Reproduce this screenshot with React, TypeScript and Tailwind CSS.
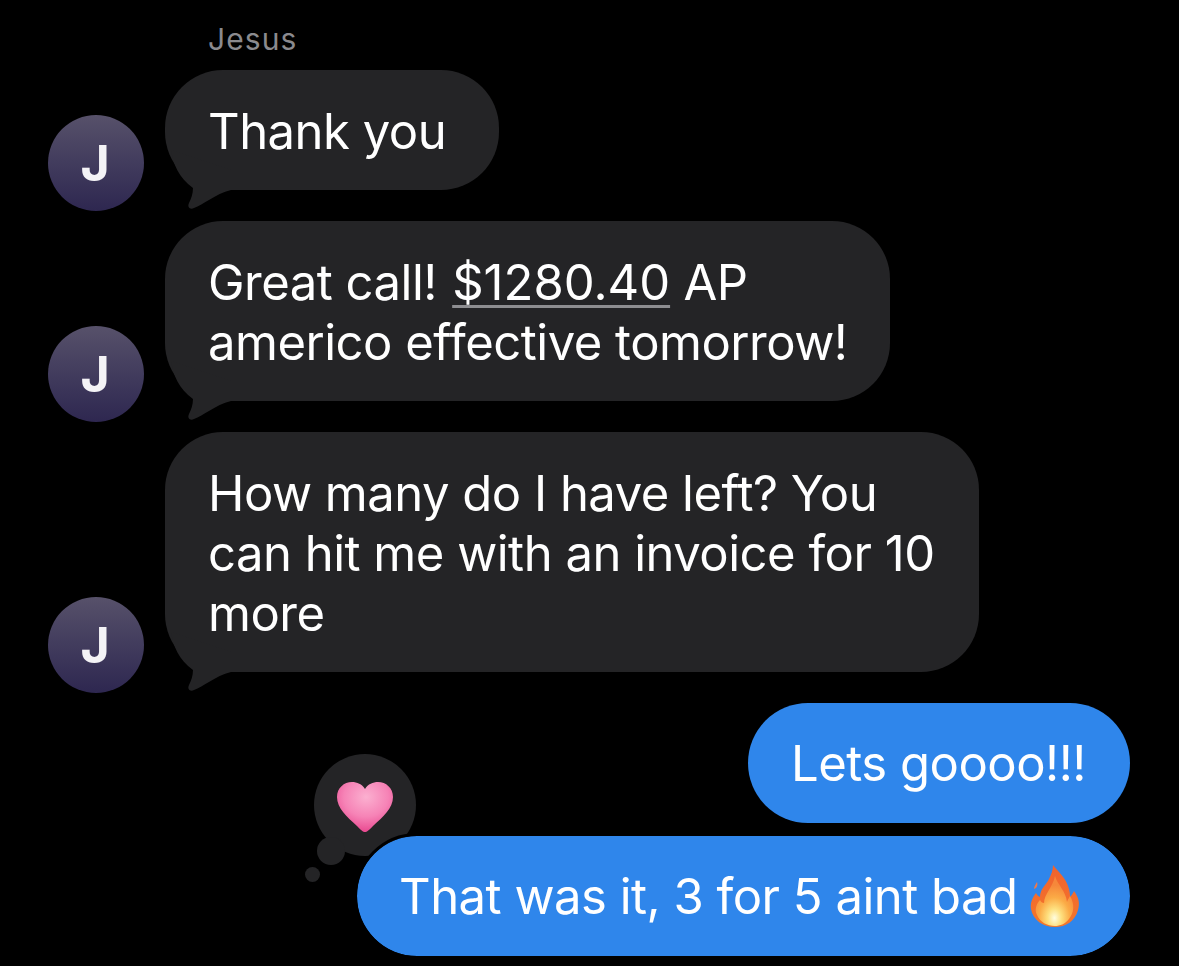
import React from "react";

const Avatar = () => (
  <div className="w-[96px] h-[96px] -mb-[21px] shrink-0 rounded-full bg-gradient-to-b from-[#57516a] to-[#2e2750] flex items-center justify-center text-[#f4f3f6] text-[50px] font-bold leading-none">
    <span className="-ml-[2px]">J</span>
  </div>
);

const Incoming = ({ width, children }: { width: string; children: React.ReactNode }) => (
  <div className="flex items-end gap-[21px]">
    <Avatar />
    <div className="relative">
      <div className={`bg-[#242426] rounded-[58px] pl-[43px] pt-[32px] pb-[28px] text-white text-[49px] leading-[60px] tracking-[-0.5px] whitespace-nowrap ${width}`}>
        {children}
      </div>
      <svg className="absolute left-[2px] -bottom-[20px]" width="70" height="60" viewBox="0 0 70 60" fill="#242426">
        <path d="M4 0 C6 14 12 28 26 38 C26 44 24 49 22 53 C20 57 23 60 27 58 C36 55 48 44 64 40 L64 20 L4 0 Z" />
      </svg>
    </div>
  </div>
);

const Heart = () => (
  <svg width="56" height="50" viewBox="0 0 56 50">
    <defs>
      <radialGradient id="heartFill" cx="52%" cy="30%" r="72%">
        <stop offset="0%" stopColor="#fbb0d0" />
        <stop offset="55%" stopColor="#f683b6" />
        <stop offset="100%" stopColor="#e8458d" />
      </radialGradient>
    </defs>
    <path
      d="M28 50 C26 50 24 48 20 44 C10 35 0 26 0 15 C0 6 7 0 15 0 C20 0 25 2 28 7 C31 2 36 0 41 0 C49 0 56 6 56 15 C56 26 46 35 36 44 C32 48 30 50 28 50 Z"
      fill="url(#heartFill)"
    />
  </svg>
);

const Flame = () => (
  <svg width="50" height="62" viewBox="0 0 50 62" className="shrink-0">
    <defs>
      <linearGradient id="flameOuter" x1="0" y1="0" x2="0" y2="1">
        <stop offset="0%" stopColor="#f0622e" />
        <stop offset="100%" stopColor="#f4772b" />
      </linearGradient>
      <radialGradient id="flameCore" cx="50%" cy="84%" r="66%">
        <stop offset="0%" stopColor="#fffde0" />
        <stop offset="28%" stopColor="#fee07f" />
        <stop offset="62%" stopColor="#fbab46" />
        <stop offset="100%" stopColor="#f6873a" />
      </radialGradient>
    </defs>
    <path
      d="M23 0 C27 6 36 12 39 24 C40 28 40 30 40 32 C42 30 43 28 44 26 C49 33 50 38 48 45 C45 56 36 62 25 62 C13 62 3 55 1 44 C0 37 3 32 6 28 C7 30 8 31 10 32 C10 24 16 20 19 14 C21 10 23 5 23 0 Z"
      fill="url(#flameOuter)"
    />
    <path d="M4 24 C4 21 6 19 7 17 C8 20 7 23 4 24 Z" fill="#f0794a" />
    <path
      d="M25 11 C27 19 36 26 37 37 C38 34 39 33 40 31 C45 39 44 48 39 54 C35 59 30 61 25 61 C17 61 10 57 7 50 C4 44 7 38 10 35 C11 37 12 38 14 38 C14 29 23 22 25 11 Z"
      fill="url(#flameCore)"
    />
  </svg>
);

export default function App() {
  return (
    <div className="w-[1179px] h-[966px] overflow-hidden bg-black font-['Inter',sans-serif]">
      <div className="pl-[48px] pr-[49px] pt-[22px] flex flex-col">
        <div className="pl-[160px] h-[48px] text-[#8a8a8e] text-[30px] leading-[34px] tracking-[1.1px]">Jesus</div>
        <div className="flex flex-col gap-[31px] items-start">
          <Incoming width="w-[334px]">Thank you</Incoming>
          <Incoming width="w-[725px]">
            Great call!{" "}
            <span className="ml-[2px] tracking-[0px] underline decoration-[#8e8e91] decoration-[3px] underline-offset-[5px] [text-decoration-skip-ink:none]">
              $1280.40
            </span>{" "}
            AP
            <br />
            americo effective tomorrow!
          </Incoming>
          <Incoming width="w-[814px]">
            How many do I have left? You
            <br />
            can hit me with an invoice for 10
            <br />
            more
          </Incoming>
        </div>
        <div className="flex flex-col items-end gap-[13px] mt-[31px]">
          <div className="bg-[#2f86eb] rounded-[60px] h-[120px] w-[382px] pl-[43px] pt-[2px] flex items-center text-white text-[49px] leading-[60px] tracking-[-0.5px] whitespace-nowrap">
            Lets goooo!!!
          </div>
          <div className="relative">
            {/* reaction sits behind the blue bubble */}
            <div className="absolute -left-[43px] -top-[82px] w-[102px] h-[102px] pt-[3px] rounded-full bg-[#242426] flex items-center justify-center">
              <Heart />
            </div>
            <div className="absolute -left-[40px] top-[1px] w-[28px] h-[28px] rounded-full bg-[#242426]" />
            <div className="absolute -left-[52px] top-[31px] w-[15px] h-[15px] rounded-full bg-[#242426]" />
            <div className="relative bg-[#2f86eb] rounded-[60px] h-[120px] w-[773px] pl-[42px] flex items-center text-white text-[49px] leading-[60px] tracking-[-0.5px] whitespace-nowrap outline-[3px] outline-black">
              <span className="w-[631px] pt-[2px]">That was it, 3 for 5 aint bad</span>
              <Flame />
            </div>
          </div>
        </div>
      </div>
    </div>
  );
}
